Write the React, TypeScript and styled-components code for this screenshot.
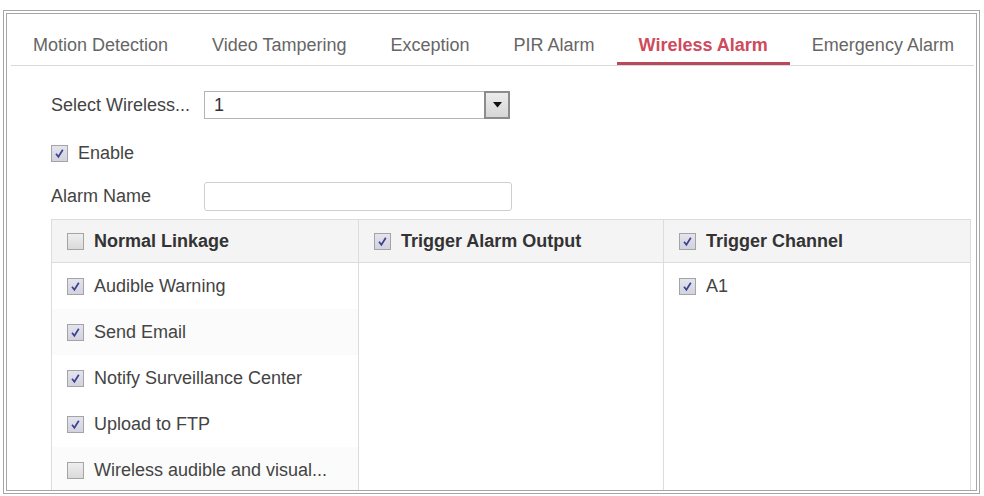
import styled, { createGlobalStyle } from "styled-components";

const GlobalStyle = createGlobalStyle`
  html, body {
    margin: 0;
    padding: 0;
    background: #fff;
  }
  body {
    font-family: "Liberation Sans", Arial, sans-serif;
    font-size: 18px;
    color: #444;
  }
`;

const Frame = styled.div`
  box-sizing: border-box;
  margin: 10px 0 0 3px;
  width: 977px;
  height: 484px;
  border: 4px double #a6a6a6;
  padding: 0 2px 0 4px;
  overflow: hidden;
  background: #fff;
`;

const TabBar = styled.div`
  display: flex;
  padding-top: 20px;
  border-bottom: 1px solid #d9d9d9;
`;

const Tab = styled.div<{ $active?: boolean }>`
  padding: 0 22px 6px;
  line-height: 22px;
  color: ${(p) => (p.$active ? "#cf4a5c" : "#666")};
  font-weight: ${(p) => (p.$active ? "bold" : "normal")};
  border-bottom: 3px solid ${(p) => (p.$active ? "#b9495a" : "transparent")};
  white-space: nowrap;
`;

const Content = styled.div`
  display: flex;
  flex-direction: column;
  padding-left: 40px;
`;

const FieldRow = styled.div<{ $top: number; $height: number }>`
  display: flex;
  align-items: center;
  margin-top: ${(p) => p.$top}px;
  height: ${(p) => p.$height}px;
`;

const Label = styled.span`
  width: 153px;
  color: #444;
  white-space: nowrap;
`;

const SelectBox = styled.div`
  box-sizing: border-box;
  display: flex;
  align-items: stretch;
  width: 306px;
  height: 28px;
  border: 1px solid #b4b4b4;
`;

const SelectValue = styled.span`
  flex: 1;
  padding-left: 9px;
  line-height: 26px;
  color: #333;
`;

const DropButton = styled.span`
  box-sizing: border-box;
  width: 26px;
  margin: -1px -1px -1px 0;
  border: 2px solid #8c8c8c;
  background: linear-gradient(#ececec, #d6d6d6);
  display: flex;
  align-items: center;
  justify-content: center;
`;

const TextInput = styled.div`
  box-sizing: border-box;
  width: 308px;
  height: 29px;
  border: 1px solid #cfcfcf;
  border-radius: 3px;
`;

const Check = styled.span<{ $on?: boolean }>`
  box-sizing: border-box;
  flex: none;
  width: 17px;
  height: 17px;
  border: 1px solid #a4a4a4;
  background: ${(p) => (p.$on ? "linear-gradient(#e4e4ee, #d2d2e0)" : "linear-gradient(#eeeeee, #dadada)")};
  display: inline-flex;
  align-items: center;
  justify-content: center;
`;

const CheckLabel = styled.label<{ $bold?: boolean }>`
  display: flex;
  align-items: center;
  gap: 10px;
  font-weight: ${(p) => (p.$bold ? "bold" : "normal")};
  color: ${(p) => (p.$bold ? "#333" : "#444")};
  white-space: nowrap;
`;

const Table = styled.div`
  box-sizing: border-box;
  margin-top: 8px;
  width: 920px;
  display: grid;
  grid-template-columns: 307px 305px 1fr;
  border: 1px solid #dcdcdc;
`;

const Column = styled.div<{ $last?: boolean }>`
  display: flex;
  flex-direction: column;
  border-right: ${(p) => (p.$last ? "none" : "1px solid #dcdcdc")};
  min-height: 300px;
`;

const HeadCell = styled.div`
  display: flex;
  align-items: center;
  height: 42px;
  padding-left: 15px;
  background: #f4f4f4;
  border-bottom: 1px solid #dcdcdc;
`;

const BodyCell = styled.div<{ $shade?: boolean }>`
  display: flex;
  align-items: center;
  height: 46px;
  padding-left: 15px;
  background: ${(p) => (p.$shade ? "#fbfbfb" : "#fff")};
`;

function CheckBox({ on }: { on?: boolean }) {
  return (
    <Check $on={on}>
      {on && (
        <svg width="13" height="13" viewBox="0 0 13 13">
          <path d="M3 6.8 L5.4 9.8 L9.8 2.8" fill="none" stroke="#3d3f8f" strokeWidth="1.7" />
        </svg>
      )}
    </Check>
  );
}

const tabs = ["Motion Detection", "Video Tampering", "Exception", "PIR Alarm", "Wireless Alarm", "Emergency Alarm"];

const linkage = [
  { text: "Audible Warning", on: true },
  { text: "Send Email", on: true, shade: true },
  { text: "Notify Surveillance Center", on: true },
  { text: "Upload to FTP", on: true },
  { text: "Wireless audible and visual...", on: false, shade: true },
];

export default function App() {
  return (
    <>
      <GlobalStyle />
      <Frame>
        <TabBar>
          {tabs.map((t) => (
            <Tab key={t} $active={t === "Wireless Alarm"}>
              {t}
            </Tab>
          ))}
        </TabBar>
        <Content>
          <FieldRow $top={25} $height={28}>
            <Label>Select Wireless...</Label>
            <SelectBox>
              <SelectValue>1</SelectValue>
              <DropButton>
                <svg width="9" height="6" viewBox="0 0 9 6">
                  <path d="M0 0 H9 L4.5 5.5 Z" fill="#111" />
                </svg>
              </DropButton>
            </SelectBox>
          </FieldRow>
          <FieldRow $top={24} $height={20}>
            <CheckLabel>
              <CheckBox on />
              Enable
            </CheckLabel>
          </FieldRow>
          <FieldRow $top={19} $height={29}>
            <Label>Alarm Name</Label>
            <TextInput />
          </FieldRow>
          <Table>
            <Column>
              <HeadCell>
                <CheckLabel $bold>
                  <CheckBox />
                  Normal Linkage
                </CheckLabel>
              </HeadCell>
              {linkage.map((l) => (
                <BodyCell key={l.text} $shade={l.shade}>
                  <CheckLabel>
                    <CheckBox on={l.on} />
                    {l.text}
                  </CheckLabel>
                </BodyCell>
              ))}
            </Column>
            <Column>
              <HeadCell>
                <CheckLabel $bold>
                  <CheckBox on />
                  Trigger Alarm Output
                </CheckLabel>
              </HeadCell>
            </Column>
            <Column $last>
              <HeadCell>
                <CheckLabel $bold>
                  <CheckBox on />
                  Trigger Channel
                </CheckLabel>
              </HeadCell>
              <BodyCell>
                <CheckLabel>
                  <CheckBox on />
                  A1
                </CheckLabel>
              </BodyCell>
            </Column>
          </Table>
        </Content>
      </Frame>
    </>
  );
}
